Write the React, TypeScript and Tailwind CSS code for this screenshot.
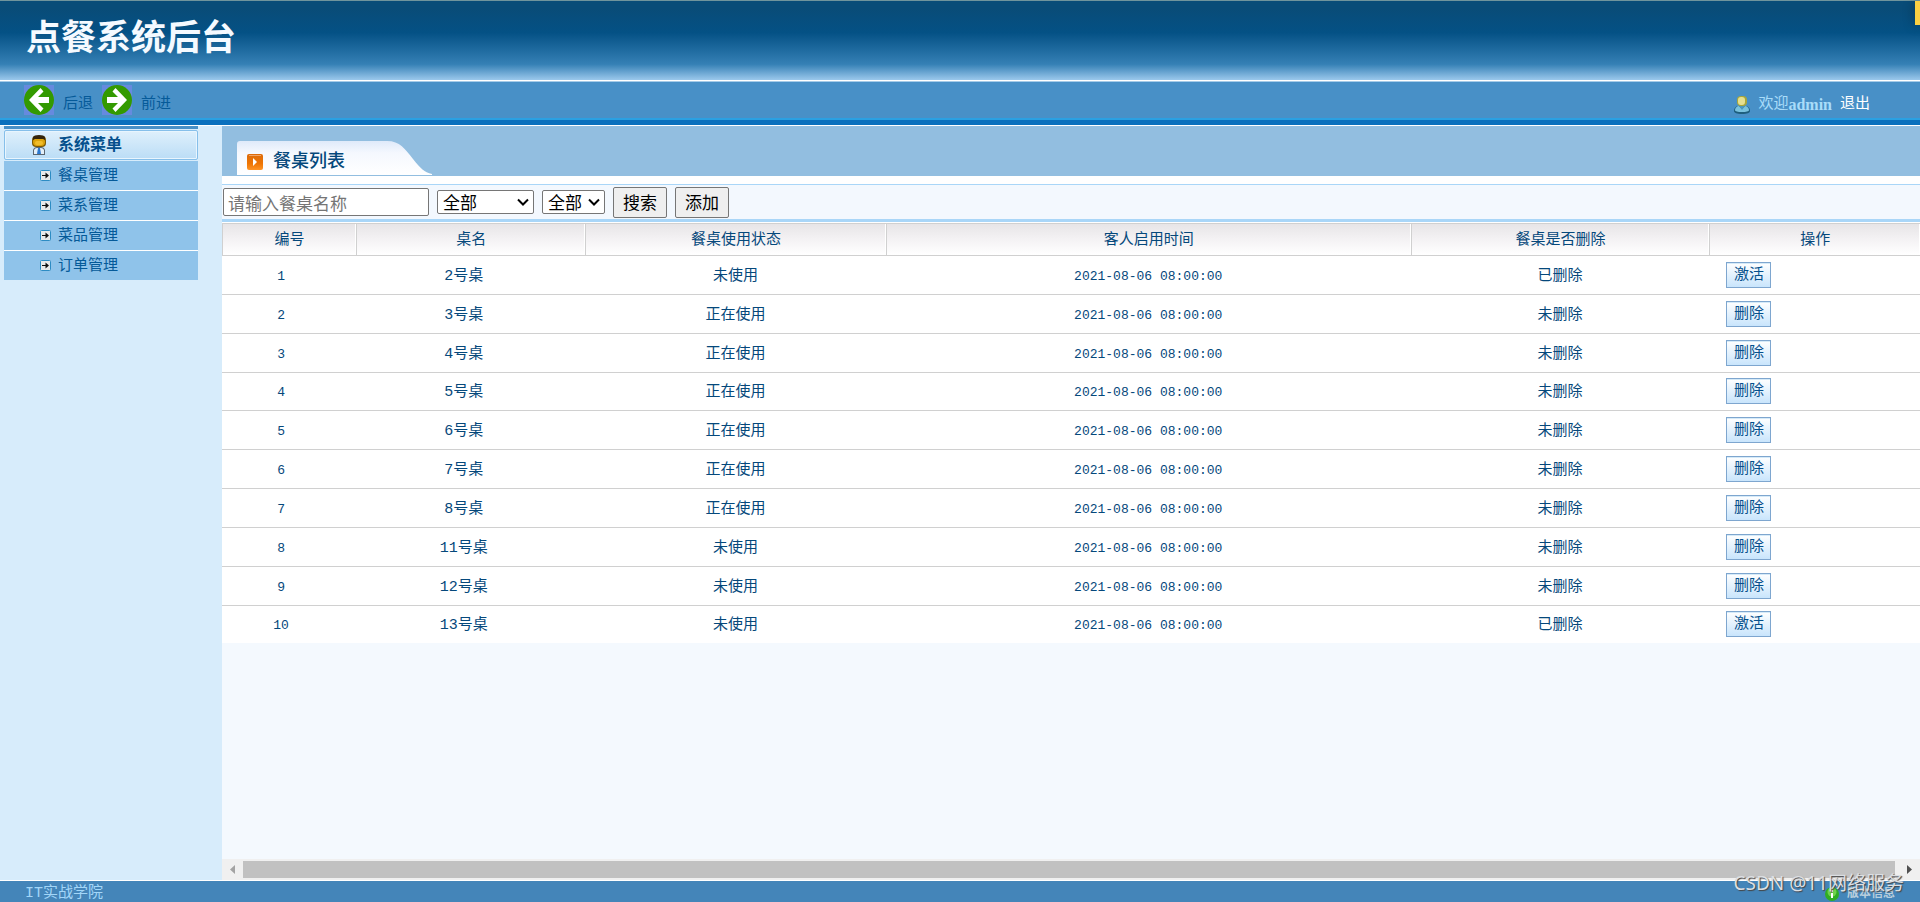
import React, { useState } from 'react';

interface DiningTable {
  id: number;
  name: string;
  inUse: boolean;
  startedAt: string;
  deleted: boolean;
}

const START = '2021-08-06 08:00:00';

const tables: DiningTable[] = [
  { id: 1, name: '2号桌', inUse: false, startedAt: START, deleted: true },
  { id: 2, name: '3号桌', inUse: true, startedAt: START, deleted: false },
  { id: 3, name: '4号桌', inUse: true, startedAt: START, deleted: false },
  { id: 4, name: '5号桌', inUse: true, startedAt: START, deleted: false },
  { id: 5, name: '6号桌', inUse: true, startedAt: START, deleted: false },
  { id: 6, name: '7号桌', inUse: true, startedAt: START, deleted: false },
  { id: 7, name: '8号桌', inUse: true, startedAt: START, deleted: false },
  { id: 8, name: '11号桌', inUse: false, startedAt: START, deleted: false },
  { id: 9, name: '12号桌', inUse: false, startedAt: START, deleted: false },
  { id: 10, name: '13号桌', inUse: false, startedAt: START, deleted: true },
];

const columns = [
  { title: '编号', width: 'w-[7.9%]' },
  { title: '桌名', width: 'w-[13.5%]' },
  { title: '餐桌使用状态', width: 'w-[17.7%]' },
  { title: '客人启用时间', width: 'w-[30.9%]' },
  { title: '餐桌是否删除', width: 'w-[17.6%]' },
  { title: '操作', width: 'w-[12.4%]' },
];

const menu = ['餐桌管理', '菜系管理', '菜品管理', '订单管理'];

const NavArrow: React.FC<{ back?: boolean }> = ({ back }) => (
  <svg viewBox="0 0 30 30" className="h-[30px] w-[30px]" aria-hidden="true">
    <rect width="30" height="30" fill="#668ade" />
    <circle cx="15" cy="15" r="15" fill="#339a00" />
    <g transform={back ? undefined : 'translate(30 0) scale(-1 1)'}>
      <path d="M25 12v6H14l5.500 5.500-3 3.500L5 15 16.500 3l3 3.500L14 12z" fill="#fff" />
    </g>
  </svg>
);

const UserIcon: React.FC = () => (
  <svg viewBox="0 0 16 18" className="h-[18px] w-4" aria-hidden="true">
    <path d="M0 15c0-3 2-5 5-5h6c3 0 5 2 5 5 0 2-3 3-8 3s-8-1-8-3z" fill="#1e5f7e" />
    <path d="M1 14c0-2 2-4 4-4l3 3 3-3c2 0 4 2 4 4 0 1.500-3 2-7 2s-7-.5-7-2z" fill="#79c2de" />
    <path d="M5 10l3 4 3-4z" fill="#4a97bd" />
    <rect x="3" y="0" width="10" height="10" rx="4" fill="#a8a63a" />
    <rect x="4" y="1" width="7" height="8" rx="3" fill="#e6e090" />
  </svg>
);

const ManagerIcon: React.FC = () => (
  <svg viewBox="0 0 14 20" className="h-5 w-3.5" aria-hidden="true">
    <path d="M1 15q1-3 4-3h4q3 0 4 3v5H1z" fill="#5b6670" />
    <path d="M2 15q1-2 3-2h4q2 0 3 2v4H2z" fill="#e4eff8" />
    <path d="M6 13h2l1 6H5z" fill="#2b78cf" />
    <rect x="0" y="1" width="14" height="11" rx="4" fill="#7d5a06" />
    <rect x="1" y="3" width="12" height="8" rx="4" fill="#dca30c" />
    <rect x="3" y="6" width="8" height="4" rx="2" fill="#f0bd2c" />
    <path d="M1 5V2q1-2 6-2t6 2v3l-2-1H3z" fill="#33240c" />
  </svg>
);

const ItemIcon: React.FC = () => (
  <svg viewBox="0 0 11 11" className="h-[11px] w-[11px]" aria-hidden="true">
    <rect x=".5" y=".5" width="10" height="10" rx="1" fill="#eaeaea" stroke="#2d8cc4" />
    <path d="M2 5h3.500V2.500L9 5.500l-3.500 3V6H2z" fill="#111" />
  </svg>
);

const PlayIcon: React.FC = () => (
  <svg viewBox="0 0 16 16" className="h-4 w-4" aria-hidden="true">
    <defs>
      <linearGradient id="play" x1="0" x2="0" y1="0" y2="1">
        <stop offset="0" stopColor="#dc6a08" />
        <stop offset=".6" stopColor="#ee7505" />
        <stop offset="1" stopColor="#ff9425" />
      </linearGradient>
    </defs>
    <rect width="16" height="16" rx="2" fill="url(#play)" />
    <path d="M2 1.500h12" stroke="#f0a366" />
    <path d="M6 4v8l4-4z" fill="#fff" />
  </svg>
);

const Filter: React.FC<{ label: string; width: string; options: string[] }> = ({ label, width, options }) => (
  <div className={`relative ${width}`}>
    <select
      aria-label={label}
      className="block h-6 w-full appearance-none rounded-xs border border-[#767676] bg-white pl-[5px] leading-5"
    >
      {options.map((option) => (
        <option key={option}>{option}</option>
      ))}
    </select>
    <svg viewBox="0 0 12 8" className="pointer-events-none absolute top-2 right-[5px] h-2 w-3" aria-hidden="true">
      <path d="M1 1.500l5 5 5-5" fill="none" stroke="#000" strokeWidth="2" />
    </svg>
  </div>
);

const App: React.FC = () => {
  const [name, setName] = useState('');

  return (
    <div className="flex min-h-screen flex-col bg-[#d7ecfb] font-['Liberation_Mono','Noto_Sans_CJK_SC',sans-serif] text-[15px] leading-5 text-[#05487b]">
      {/* Header */}
      <header>
        <div className="relative flex h-20 items-center border-t border-[#70949c] bg-[linear-gradient(#094c78_0,#094c78_10%,#045185_40%,#3580b5_80%,#9bc8ec_100%)] pb-3 pl-[26px]">
          <h1 className="font-['Noto_Sans_CJK_SC',sans-serif] text-[35px] leading-10 font-bold text-[#f5faff]">点餐系统后台</h1>
          <div className="absolute top-0 right-0 h-6 w-[5px] bg-[#fbd043] shadow-[0_0_12px_rgba(0,0,0,0.4)]"></div>
        </div>
        <div className="flex h-[38px] items-center justify-between border-t border-white bg-[#4890c7] pr-[50px] pl-6 shadow-[inset_0_1px_0_#a5cbe8]">
          <nav className="flex items-center text-[#055a99]">
            <button type="button" className="flex items-center gap-[9px]">
              <NavArrow back />
              <span className="pt-2.5">后退</span>
            </button>
            <button type="button" className="ml-[9px] flex items-center gap-[9px]">
              <NavArrow />
              <span className="pt-2.5">前进</span>
            </button>
          </nav>
          <div className="flex items-center pt-2.5 text-[#a9dcf9]">
            <UserIcon />
            <span className="ml-2">欢迎</span>
            <b className="font-['Liberation_Serif',serif] text-base leading-5">admin</b>
            <a href="#logout" className="ml-2 text-white">退出</a>
          </div>
        </div>
        <div className="h-2 border-t-2 border-b border-t-[#2aa0e2] border-b-white bg-[#0a70bd]"></div>
      </header>

      <div className="flex grow">
        {/* Sidebar */}
        <aside className="w-[222px] shrink-0 pr-6 pl-1">
          <div className="h-[3px] bg-[#4890c7]"></div>
          <h2 className="mt-px flex h-[30px] items-center rounded-xs border border-[#86bfea] bg-[linear-gradient(#dff0fc,#bbddf6)] pl-[27px] text-base leading-5 font-bold text-[#05508c] shadow-[inset_0_0_0_1px_#e8f5fe]">
            <ManagerIcon />
            <span className="ml-3 pt-0.5">系统菜单</span>
          </h2>
          <ul className="mt-px">
            {menu.map((item) => (
              <li key={item} className="border-b border-white bg-[#8fc3ea] last:border-b-0">
                <a href="#menu" className="flex h-[29px] items-center pl-9 text-[#055a99]">
                  <ItemIcon />
                  <span className="ml-[7px] pt-0.5">{item}</span>
                </a>
              </li>
            ))}
          </ul>
        </aside>

        {/* Content */}
        <main className="flex min-w-0 grow flex-col bg-[#f4f9fe]">
          <div className="flex h-[50px] items-end bg-[#92bee0] pb-px pl-[15px]">
            <div className="relative h-[34px] w-[195px]">
              <svg viewBox="0 0 195 34" className="absolute inset-0 h-full w-full" aria-hidden="true">
                <defs>
                  <linearGradient id="tab" x1="0" x2="0" y1="0" y2="1">
                    <stop offset="0" stopColor="#dfeafa" />
                    <stop offset=".35" stopColor="#f5f8fe" />
                    <stop offset="1" stopColor="#fff" />
                  </linearGradient>
                </defs>
                <path d="M0 34V3Q0 0 3 0H150C163 0 168 8 176 18 184 28 187 31 195 33v1z" fill="url(#tab)" />
              </svg>
              <h3 className="relative flex h-full items-center gap-2.5 pt-[7px] pl-2.5 text-lg leading-6 font-medium">
                <PlayIcon />
                餐桌列表
              </h3>
            </div>
          </div>

          {/* Search bar */}
          <div className="bg-white pt-2">
            <form
              className="flex h-[38px] items-center gap-2 border-t border-b-3 border-[#a9d6f8] bg-[#f3f8fe] pl-px font-['Noto_Sans_CJK_SC',sans-serif] text-[17px] leading-5 text-black"
              onSubmit={(e) => e.preventDefault()}
            >
              <input
                aria-label="请输入餐桌名称"
                placeholder="请输入餐桌名称"
                value={name}
                onChange={(e) => setName(e.target.value)}
                className="h-7 w-[206px] rounded-xs border border-[#767676] bg-white px-1 placeholder:text-[#757575]"
              />
              <Filter label="餐桌使用状态" width="w-[97px]" options={['全部', '未使用', '正在使用']} />
              <Filter label="餐桌是否删除" width="w-[63px]" options={['全部', '已删除', '未删除']} />
              <button type="submit" className="h-[31px] rounded-xs border border-[#767676] bg-[#efefef] px-[9px]">搜索</button>
              <button type="button" className="h-[31px] rounded-xs border border-[#767676] bg-[#efefef] px-[9px]">添加</button>
            </form>
          </div>

          {/* Table list */}
          <div className="border-t border-white bg-white">
            <table className="h-[420px] w-full table-fixed border-separate border-spacing-0">
              <thead>
                <tr>
                  {columns.map((col) => (
                    <th
                      key={col.title}
                      className={`${col.width} h-[33px] border-t border-b border-l border-[#d0d0d0] bg-[linear-gradient(#e7e5e7,#f4f2f4_50%,#fff)] px-0 pt-0.5 pb-0 font-normal shadow-[inset_-1px_0_0_#fff]`}
                    >
                      {col.title}
                    </th>
                  ))}
                </tr>
              </thead>
              <tbody className="[&>tr:last-child>td]:border-b-0 [&_td]:border-b [&_td]:border-[#d0d0d0] [&_td]:px-0 [&_td]:text-center">
                {tables.map((t) => (
                  <tr key={t.id}>
                    <td className="pt-1 text-[13px]"><span className="pr-4">{t.id}</span></td>
                    <td className="pt-1"><span className="pr-3.5">{t.name}</span></td>
                    <td className="pt-1">{t.inUse ? '正在使用' : '未使用'}</td>
                    <td className="pt-1 text-[13px]">{t.startedAt}</td>
                    <td className="pt-1">{t.deleted ? '已删除' : '未删除'}</td>
                    <td>
                      <button
                        type="button"
                        className="ml-[17px] block h-[26px] w-[45px] border border-[#7ea6cf] bg-[linear-gradient(#fff,#c9e5fc)] pt-0.5 text-[#05508c] shadow-[inset_0_1px_0_#d5eaf8]"
                      >
                        {t.deleted ? '激活' : '删除'}
                      </button>
                    </td>
                  </tr>
                ))}
              </tbody>
            </table>
          </div>

          {/* Horizontal scrollbar */}
          <div className="mt-auto flex h-[21px] items-center gap-2 bg-[#f0f0f0] px-2" aria-hidden="true">
            <svg viewBox="0 0 5 9" className="h-[9px] w-[5px]"><path d="M5 0v9L0 4.500z" fill="#a3a3a3" /></svg>
            <div className="mr-1 h-[17px] grow bg-[#c1c1c1]"></div>
            <svg viewBox="0 0 5 9" className="h-[9px] w-[5px]"><path d="M0 0v9l5-4.500z" fill="#505050" /></svg>
          </div>
        </main>
      </div>

      {/* Footer */}
      <footer className="relative flex h-[22px] items-center justify-between border-t border-white bg-[#4485b9] pt-1 pr-[25px] pl-[25px] text-[#a3d6f8]">
        <span>IT实战学院</span>
        <span className="flex items-center gap-2 text-[#b9cfdd]">
          <svg viewBox="0 0 14 14" className="h-3.5 w-3.5" aria-hidden="true">
            <circle cx="7" cy="7" r="7" fill="#2fae22" />
            <circle cx="7" cy="5" r="4.500" fill="#6fd24c" />
            <path d="M6 6h2v5H6zM6 3h2v2H6z" fill="#fff" />
          </svg>
          <span className="text-[12px] font-bold">版本信息</span>
        </span>
        <span className="absolute right-4 bottom-[7px] font-['Noto_Sans','Noto_Sans_CJK_SC',sans-serif] text-[19px] leading-6 text-[#dcdfe2] [text-shadow:1px_1px_1px_#444]">
          CSDN @11网络服务
        </span>
      </footer>
    </div>
  );
};

export default App;
